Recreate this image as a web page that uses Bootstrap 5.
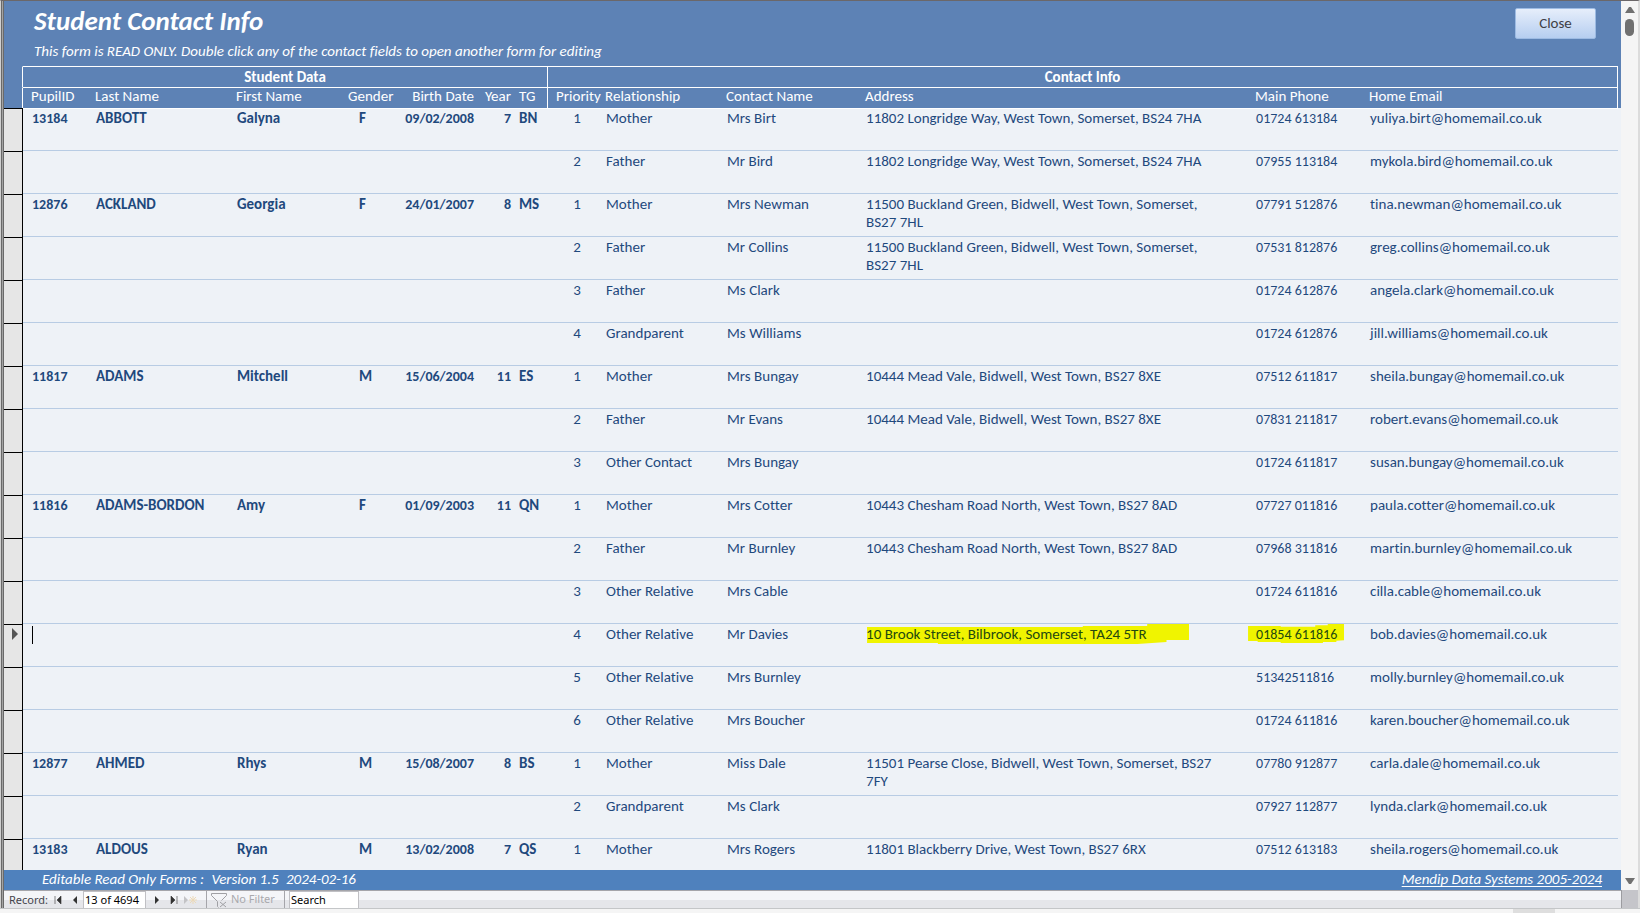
<!DOCTYPE html>
<html lang="en">
<head>
<meta charset="utf-8">
<meta name="viewport" content="width=device-width, initial-scale=1">
<title>Student Contact Info</title>
<link href="https://cdn.jsdelivr.net/npm/bootstrap@5.3.0/dist/css/bootstrap.min.css" rel="stylesheet">
<style>
  body { font-family: Calibri, Carlito, Lato, sans-serif; font-size: 15px; line-height: 18px; font-variant-ligatures: none; background: #f4f4f4; color: #1f497d; }
  .app-window { border-top: 1px solid #6b6769; border-left: 1px solid #d0d0d0; border-right: 2px solid #dcdcdc; }
  .frame-edge { width: 3px; background: linear-gradient(90deg, #6a6a6a 1px, #a2a2a2 1px, #a2a2a2 2px, #6a6a6a 2px); }
  .form-head { background: #5d82b5; color: #fff; height: 65px; padding: 4px 25px 0 30px; }
  .form-head h1 { font-size: 27px; line-height: 32px; font-weight: 700; font-style: italic; }
  .form-head p { line-height: 28px; font-style: italic; }
  .btn-close-form { width: 81px; height: 31px; padding: 0 0 2px; margin-top: 3px; border: 1px solid #9dbbe3; border-radius: 2px; background: linear-gradient(#e6eefb, #b6cef0); color: #3f3f46; font-size: 15px; line-height: 18px; }
  .form-body { background: #eef2f7; padding-right: 3px; }
  .contacts { table-layout: fixed; border-collapse: separate; border-spacing: 0; }
  .contacts th, .contacts td { padding: 1px 0 0 9px; vertical-align: top; white-space: nowrap; }
  .contacts thead th { height: 21px; line-height: 16px; background: #5d82b5; color: #fff; border-top: 1px solid #fff; font-weight: 400; padding: 0 0 0 8px; }
  .contacts thead th.group { font-weight: 700; text-align: center; padding-left: 0; line-height: 20px; }
  .contacts thead th.pick { border-top-color: #5d82b5; }
  .contacts thead th:last-child { border-right: 1px solid #fff; box-shadow: 3px 0 0 #5d82b5; }
  .contacts .divide { border-right: 1px solid #fff; }
  .contacts tbody td { height: 43px; border-bottom: 1px solid #b8cce4; padding-top: 1px; }
  .contacts tbody td.digits, .contacts tbody td.phone { font-size: 14px; padding-top: 2px; }
  .contacts tbody tr:first-child td { border-top: 1px solid #fff; padding-top: 0; }
  .contacts tbody tr:first-child td.digits, .contacts tbody tr:first-child td.phone { padding-top: 1px; }
  .contacts tbody td.student { font-weight: 700; }
  .contacts thead th.pick, .contacts td.pick { padding: 0; border-right: 1px solid #fff; }
  .contacts tbody tr td.pick { background: #e6e6e6; border-top: 1px solid #000; border-bottom: 0; border-right-color: #000; }
  .pick svg { display: block; margin: 3px 0 0 8px; }
  .contacts .num { text-align: right; padding-left: 0; padding-right: 2px; }
  .contacts .tg { padding-left: 6px; }
  .contacts td.gender { padding-left: 19px; }
  .contacts td.priority { text-align: center; }
  .contacts td.address { white-space: normal; padding-right: 26px; }
  .caret { display: inline-block; width: 1px; height: 18px; background: #000; }
  .marked { position: relative; z-index: 0; color: #24490f; }
  .marked::before { content: ""; position: absolute; z-index: -1; background: #f0f400; }
  .address .marked::before { left: 1px; top: -1px; width: 322px; height: 20px; clip-path: polygon(0 15%, 67% 15%, 67% 10%, 87% 10%, 87% 0, 100% 0, 100% 80%, 93% 80%, 93% 90%, 84% 100%, 22% 100%, 22% 95%, 0 95%); }
  .phone .marked::before { left: -8px; top: -2px; width: 96px; height: 19px; clip-path: polygon(0 10%, 34% 10%, 34% 15%, 70% 15%, 70% 7%, 83% 7%, 83% 0, 100% 0, 100% 85%, 92% 88%, 92% 95%, 78% 95%, 78% 100%, 34% 100%, 34% 95%, 10% 95%, 10% 90%, 0 90%); }
  .form-foot { height: 20px; line-height: 19px; background: #4f81bd; color: #fff; font-style: italic; padding: 0 19px 0 38px; }
  .form-foot a { color: #fff; text-underline-offset: 2px; }
  .navigator { height: 18px; border-top: 1px solid #a5a5aa; background: linear-gradient(#f4f5f8 9px, #e5e6ea 9px); color: #44444c; font-family: "Noto Sans", sans-serif; font-size: 11px; line-height: 18px; }
  .navigator label { padding: 0 1px 0 5px; }
  .navigator button { border: 0; background: none; padding: 0; width: 17px; height: 17px; line-height: 0; }
  .navigator .position ~ button { width: 16px; }
  .navigator .spacer { width: 1px; height: 17px; background: #a5a5aa; }
  .navigator input { border: 1px solid #c0c0c4; border-bottom: 0; border-radius: 0; padding: 0 0 1px 1px; height: 17px; line-height: 15px; background: #fff; color: #000; }
  .navigator .position { width: 63px; }
  .navigator .search { width: 70px; }
  .navigator .search::placeholder { color: #000; opacity: 1; }
  .navigator .position ~ .filter-off { width: 73px; color: #a9a9ad; line-height: 16px; text-align: left; white-space: nowrap; }
  .scroller { width: 17px; background: #f5f5f5; }
  .scroller .track { padding: 5px 0 5px; }
  .scroller .thumb { width: 9px; height: 17px; border-radius: 5px; background: #707070; margin-top: 5px; }
  .scroller .corner { height: 18px; background: #c5c5ca; border-left: 1px solid #9c9ca0; }
  .under { height: 5px; border-top: 1px solid #c4c6c8; background: #f5f5f5; padding-right: 85px; }
  .under span { width: 42px; background: #dedede; }
</style>
</head>
<body>
<div class="vh-100 d-flex flex-column overflow-hidden">
  <div class="app-window d-flex flex-fill overflow-hidden">
    <div class="frame-edge flex-shrink-0"></div>
    <main class="d-flex flex-column flex-fill overflow-hidden">
      <header class="form-head d-flex justify-content-between flex-shrink-0">
        <div>
          <h1 class="m-0">Student Contact Info</h1>
          <p class="m-0">This form is READ ONLY. Double click any of the contact fields to open another form for editing</p>
        </div>
        <button type="button" class="btn btn-close-form">Close</button>
      </header>
      <div class="form-body flex-fill overflow-hidden">
        <table class="contacts w-100">
          <colgroup>
            <col style="width:19px"><col style="width:64px"><col style="width:141px"><col style="width:112px"><col style="width:55px"><col style="width:81px"><col style="width:37px"><col style="width:35px"><col style="width:49px"><col style="width:121px"><col style="width:139px"><col style="width:390px"><col style="width:114px"><col>
          </colgroup>
          <thead>
            <tr><th class="pick"></th><th class="group divide" colspan="7">Student Data</th><th class="group" colspan="6">Contact Info</th></tr>
            <tr><th class="pick"></th><th>PupilID</th><th>Last Name</th><th>First Name</th><th>Gender</th><th class="num">Birth Date</th><th class="num">Year</th><th class="tg divide">TG</th><th>Priority</th><th>Relationship</th><th>Contact Name</th><th>Address</th><th>Main Phone</th><th>Home Email</th></tr>
          </thead>
          <tbody id="rows"></tbody>
        </table>
      </div>
      <footer class="form-foot d-flex justify-content-between flex-shrink-0">
        <div><span class="me-1">Editable Read Only Forms :</span> <span class="me-1">Version 1.5</span> <span>2024-02-16</span></div>
        <a href="#">Mendip Data Systems 2005-2024</a>
      </footer>
      <div class="navigator d-flex flex-shrink-0">
        <label for="position">Record:</label>
        <button type="button" aria-label="First record"><svg width="8" height="8"><path d="M1 0v8M7 0v8L3 4z" fill="#333" stroke="#333" stroke-width=".6"/></svg></button>
        <button type="button" aria-label="Previous record"><svg width="8" height="8"><path d="M6 0v8L2 4z" fill="#333"/></svg></button>
        <input id="position" class="position" value="13 of 4694">
        <button type="button" class="ms-1" aria-label="Next record"><svg width="8" height="8"><path d="M1 0v8l4-4z" fill="#333"/></svg></button>
        <button type="button" aria-label="Last record"><svg width="8" height="8"><path d="M7 0v8M1 0v8l4-4z" fill="#333" stroke="#333" stroke-width=".6"/></svg></button>
        <button type="button" aria-label="New record"><svg width="14" height="10"><path d="M1 1v8l4-4z" fill="#c3c3c6"/><path d="M10 1v8M6 5h8M7 2l6 6M13 2l-6 6" stroke="#ecd9b8"/></svg></button>
        <span class="spacer ms-2"></span>
        <button type="button" class="filter-off ms-1" disabled><svg width="17" height="16" viewBox="0 0 17 16" fill="none" stroke="#a0a0a4"><path d="M.5 1.500h15v2l-5 5M.5 1.500v2l6 6v5l1 1M9 10l6 5M15 10l-6 5"/></svg> No Filter</button>
        <span class="spacer me-1"></span>
        <input class="search" type="text" placeholder="Search" aria-label="Search">
      </div>
    </main>
    <div class="scroller d-flex flex-column flex-shrink-0">
      <div class="track d-flex flex-column align-items-center flex-fill">
        <svg width="10" height="8"><path d="M0 7L4 1h2l4 6z" fill="#707070"/></svg>
        <div class="thumb"></div>
        <svg class="mt-auto" width="10" height="8"><path d="M0 1l4 6h2l4-6z" fill="#707070"/></svg>
      </div>
      <div class="corner"></div>
    </div>
  </div>
  <div class="under d-flex justify-content-end flex-shrink-0"><span></span></div>
</div>
<script>
  const mail = "@homemail.co.uk";
  // student fields: id, last, first, gender, birth date, year, tutor group
  // contact fields: priority, relationship, name, address, phone, email user
  const students = [
    [["13184","ABBOTT","Galyna","F","09/02/2008","7","BN"], [
      ["1","Mother","Mrs Birt","11802 Longridge Way, West Town, Somerset, BS24 7HA","01724 613184","yuliya.birt"],
      ["2","Father","Mr Bird","11802 Longridge Way, West Town, Somerset, BS24 7HA","07955 113184","mykola.bird"]]],
    [["12876","ACKLAND","Georgia","F","24/01/2007","8","MS"], [
      ["1","Mother","Mrs Newman","11500 Buckland Green, Bidwell, West Town, Somerset, BS27 7HL","07791 512876","tina.newman"],
      ["2","Father","Mr Collins","11500 Buckland Green, Bidwell, West Town, Somerset, BS27 7HL","07531 812876","greg.collins"],
      ["3","Father","Ms Clark","","01724 612876","angela.clark"],
      ["4","Grandparent","Ms Williams","","01724 612876","jill.williams"]]],
    [["11817","ADAMS","Mitchell","M","15/06/2004","11","ES"], [
      ["1","Mother","Mrs Bungay","10444 Mead Vale, Bidwell, West Town, BS27 8XE","07512 611817","sheila.bungay"],
      ["2","Father","Mr Evans","10444 Mead Vale, Bidwell, West Town, BS27 8XE","07831 211817","robert.evans"],
      ["3","Other Contact","Mrs Bungay","","01724 611817","susan.bungay"]]],
    [["11816","ADAMS-BORDON","Amy","F","01/09/2003","11","QN"], [
      ["1","Mother","Mrs Cotter","10443 Chesham Road North, West Town, BS27 8AD","07727 011816","paula.cotter"],
      ["2","Father","Mr Burnley","10443 Chesham Road North, West Town, BS27 8AD","07968 311816","martin.burnley"],
      ["3","Other Relative","Mrs Cable","","01724 611816","cilla.cable"],
      ["4","Other Relative","Mr Davies","10 Brook Street, Bilbrook, Somerset, TA24 5TR","01854 611816","bob.davies", true],
      ["5","Other Relative","Mrs Burnley","","51342511816","molly.burnley"],
      ["6","Other Relative","Mrs Boucher","","01724 611816","karen.boucher"]]],
    [["12877","AHMED","Rhys","M","15/08/2007","8","BS"], [
      ["1","Mother","Miss Dale","11501 Pearse Close, Bidwell, West Town, Somerset, BS27 7FY","07780 912877","carla.dale"],
      ["2","Grandparent","Ms Clark","","07927 112877","lynda.clark"]]],
    [["13183","ALDOUS","Ryan","M","13/02/2008","7","QS"], [
      ["1","Mother","Mrs Rogers","11801 Blackberry Drive, West Town, BS27 6RX","07512 613183","sheila.rogers"]]]
  ];
  const kinds = ["digits", "", "", "gender", "num digits", "num digits", "tg"];
  const arrow = '<svg width="7" height="12"><path d="M0 0v12l6-6z" fill="#555"/></svg>';
  let html = "";
  for (const [student, contacts] of students) {
    contacts.forEach(([priority, relation, name, address, phone, user, current], i) => {
      const mark = t => current ? `<span class="marked">${t}</span>` : t;
      html += `<tr><td class="pick">${current ? arrow : ""}</td>`;
      html += kinds.map((k, n) => `<td class="student ${k}">${i === 0 ? student[n] : current && n === 0 ? '<span class="caret"></span>' : ""}</td>`).join("");
      html += `<td class="priority">${priority}</td><td>${relation}</td><td>${name}</td><td class="address">${mark(address)}</td><td class="phone">${mark(phone)}</td><td>${user}${mail}</td></tr>`;
    });
  }
  document.getElementById("rows").innerHTML = html;
</script>
<script src="https://cdn.jsdelivr.net/npm/bootstrap@5.3.0/dist/js/bootstrap.bundle.min.js"></script>
</body>
</html>
